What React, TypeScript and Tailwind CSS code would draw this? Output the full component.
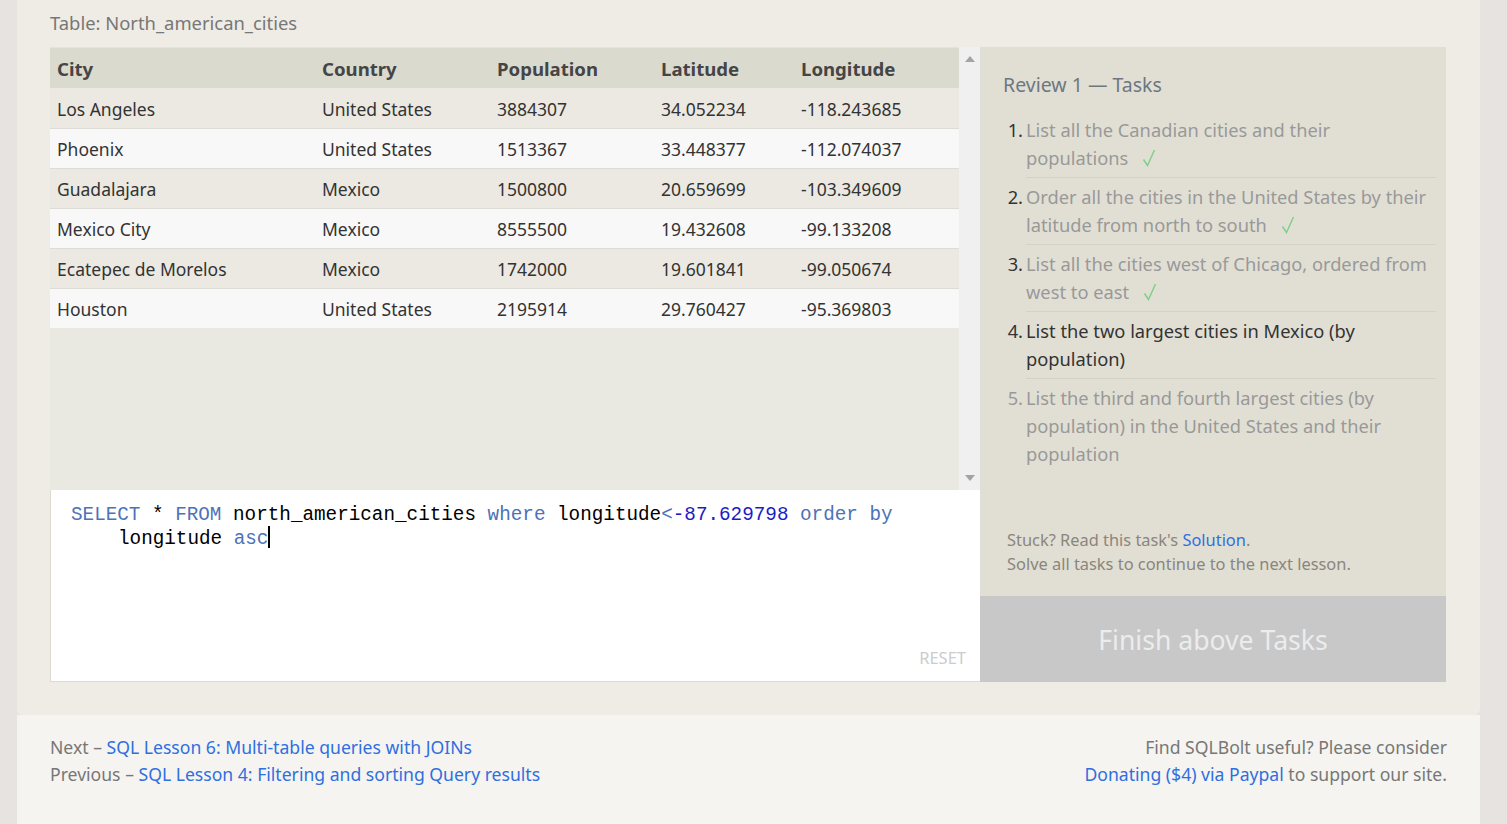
import React from "react";

const rows = [
  ["Los Angeles", "United States", "3884307", "34.052234", "-118.243685"],
  ["Phoenix", "United States", "1513367", "33.448377", "-112.074037"],
  ["Guadalajara", "Mexico", "1500800", "20.659699", "-103.349609"],
  ["Mexico City", "Mexico", "8555500", "19.432608", "-99.133208"],
  ["Ecatepec de Morelos", "Mexico", "1742000", "19.601841", "-99.050674"],
  ["Houston", "United States", "2195914", "29.760427", "-95.369803"],
];

const cols = ["City", "Country", "Population", "Latitude", "Longitude"];
const widths = ["w-[265px]", "w-[175px]", "w-[164px]", "w-[140px]", "w-[165px]"];

const tasks: { text: string; done: boolean; current?: boolean }[] = [
  { text: "List all the Canadian cities and their populations", done: true },
  { text: "Order all the cities in the United States by their latitude from north to south", done: true },
  { text: "List all the cities west of Chicago, ordered from west to east", done: true },
  { text: "List the two largest cities in Mexico (by population)", done: false, current: true },
  { text: "List the third and fourth largest cities (by population) in the United States and their population", done: false },
];

const FONT = "font-['Segoe_UI','Noto_Sans',sans-serif]";

function Check() {
  return (
    <svg className="inline-block ml-[14px] -mt-[4px] align-middle" width="14" height="18" viewBox="0 0 14 18">
      <path d="M1.5 10.5 L5.5 16.5 L12.5 1" fill="none" stroke="#7fd08a" strokeWidth="1.5" />
    </svg>
  );
}

function ResultTable() {
  return (
    <div className="flex h-[443px]">
      <div className="w-[909px] bg-[#e9e8e1] border-t border-[#e4e2da]">
        <div className="flex h-[40px] items-center pt-[2px] bg-[#dbdacf] text-[18.6px] font-bold text-[#454545]">
          {cols.map((c, i) => (
            <div key={c} className={`${widths[i]} pl-[7px]`}>
              {c}
            </div>
          ))}
        </div>
        {rows.map((r, ri) => (
          <div
            key={r[0]}
            className={`flex h-[40px] items-center pt-[2px] text-[17.5px] text-[#333] ${
              ri % 2 === 0 ? "bg-[#ebe9e2]" : "bg-[#f8f8f8]"
            } ${ri > 0 ? "border-t border-[#dddcd6]" : ""}`}
          >
            {r.map((v, i) => (
              <div key={i} className={`${widths[i]} pl-[7px]`}>
                {v}
              </div>
            ))}
          </div>
        ))}
      </div>
      <div className="w-[21px] bg-[#f0f0f0] flex flex-col items-center justify-between py-[9px]">
        <svg width="10" height="6" viewBox="0 0 10 6">
          <path d="M5 0 L10 6 L0 6 Z" fill="#a3a3a3" />
        </svg>
        <svg width="10" height="6" viewBox="0 0 10 6">
          <path d="M0 0 L10 0 L5 6 Z" fill="#a3a3a3" />
        </svg>
      </div>
    </div>
  );
}

function Editor() {
  return (
    <div className="relative h-[192px] bg-white border-l border-b border-[#dcdad3] pt-[13px] pl-[20px] font-['Liberation_Mono',monospace] text-[19.3px] leading-[24px] text-black">
      <div>
        <span className="text-[#4d72b8]">SELECT</span> * <span className="text-[#4d72b8]">FROM</span> north_american_cities{" "}
        <span className="text-[#4d72b8]">where</span> longitude<span className="text-[#4d72b8]">&lt;</span>
        <span className="text-[#1c1cc6]">-87.629798</span> <span className="text-[#4d72b8]">order</span>{" "}
        <span className="text-[#4d72b8]">by</span>
      </div>
      <div className="pl-[47px]">
        longitude <span className="text-[#4d72b8]">asc</span>
        <span className="inline-block w-[2px] h-[22px] bg-black align-middle -mt-[3px]" />
      </div>
      <div className={`absolute right-[14px] bottom-[11px] text-[16.5px] text-[#cccccc] ${FONT}`}>RESET</div>
    </div>
  );
}

function TaskPanel() {
  return (
    <div className="w-[466px] bg-[#e1dfd4] flex flex-col">
      <div className="flex-1 pl-[23px] pr-[10px] pt-[24px]">
        <div className="text-[19.5px] text-[#6e7780] leading-[28px]">Review 1 — Tasks</div>
        <ol className="mt-[12px]">
          {tasks.map((t, i) => (
            <li key={i} className="flex text-[18.3px] leading-[28px]">
              <span
                className={`w-[23px] shrink-0 text-right pr-[3px] py-[5px] ${
                  i === 4 ? "text-[#999]" : "text-[#333]"
                }`}
              >
                {i + 1}.
              </span>
              <span
                className={`flex-1 py-[5px] ${i < tasks.length - 1 ? "border-b border-[#d4d2c7]" : ""} ${
                  t.current ? "text-[#333]" : "text-[#999]"
                }`}
              >
                {t.text}
                {t.done && <Check />}
              </span>
            </li>
          ))}
        </ol>
      </div>
      <div className="pl-[27px] pb-[20px] text-[16.4px] leading-[24px] text-[#8b857c]">
        <div>
          Stuck? Read this task's <span className="text-[#2f6fe0]">Solution</span>.
        </div>
        <div>Solve all tasks to continue to the next lesson.</div>
      </div>
      <div className="h-[86px] bg-[#c8c8c8] flex items-center justify-center pt-[4px] text-[26.6px] text-[#ececec]">
        Finish above Tasks
      </div>
    </div>
  );
}

export default function App() {
  return (
    <div className={`min-h-screen bg-[#e6e3e0] ${FONT}`}>
      <div className="ml-[17px] w-[1463px]">
        <div className="bg-[#efece5] px-[33px] pb-[33px] rounded-b-[6px]">
          <div className="pt-[9px] text-[18.4px] leading-[28px] text-[#777]">Table: North_american_cities</div>
          <div className="mt-[10px] flex">
            <div className="w-[930px]">
              <ResultTable />
              <Editor />
            </div>
            <TaskPanel />
          </div>
        </div>
        <div className="bg-[#f5f4f0] h-[109px] px-[33px] pt-[19px] flex justify-between text-[17.6px] leading-[27px] text-[#777]">
          <div>
            <div>
              Next – <span className="text-[#2f6fe0]">SQL Lesson 6: Multi-table queries with JOINs</span>
            </div>
            <div>
              Previous – <span className="text-[#2f6fe0]">SQL Lesson 4: Filtering and sorting Query results</span>
            </div>
          </div>
          <div className="text-right">
            <div>Find SQLBolt useful? Please consider</div>
            <div>
              <span className="text-[#2f6fe0]">Donating ($4) via Paypal</span> to support our site.
            </div>
          </div>
        </div>
      </div>
    </div>
  );
}
